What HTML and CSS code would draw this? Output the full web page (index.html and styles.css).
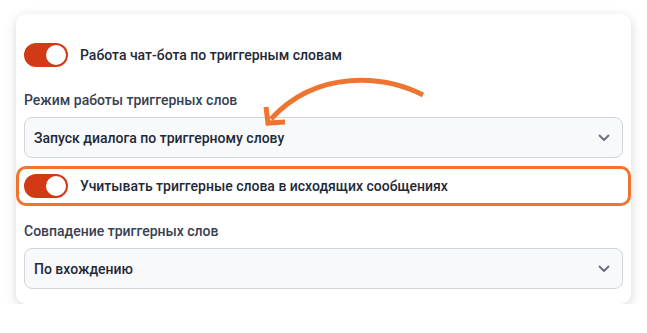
FILE: index.html
```html
<!DOCTYPE html>
<html lang="ru">
    <head>
        <meta charset="UTF-8">
        <meta name="viewport" content="width=device-width, initial-scale=1.0">
        <title>Триггерные слова</title>
        <link rel="stylesheet" href="styles.css">
    </head>
    <body>
        <div class="card">
            <div class="toggle-row">
                <span class="switch on"><span class="knob"></span></span>
                <span class="toggle-label">Работа чат-бота по триггерным словам</span>
            </div>

            <div class="field">
                <div class="field-label">Режим работы триггерных слов</div>
                <div class="select">
                    <span>Запуск диалога по триггерному слову</span>
                    <svg class="chevron" width="12" height="8" viewBox="0 0 12 8">
                        <path d="M1.5 1.5 L6 6 L10.5 1.5" fill="none" stroke="#6b7280" stroke-width="2" stroke-linecap="round" stroke-linejoin="round"/>
                    </svg>
                </div>
            </div>

            <div class="toggle-row highlight">
                <span class="switch on"><span class="knob"></span></span>
                <span class="toggle-label">Учитывать триггерные слова в исходящих сообщениях</span>
            </div>

            <div class="field second">
                <div class="field-label">Совпадение триггерных слов</div>
                <div class="select">
                    <span>По вхождению</span>
                    <svg class="chevron" width="12" height="8" viewBox="0 0 12 8">
                        <path d="M1.5 1.5 L6 6 L10.5 1.5" fill="none" stroke="#6b7280" stroke-width="2" stroke-linecap="round" stroke-linejoin="round"/>
                    </svg>
                </div>
            </div>

            <!-- стрелка-подсказка поверх карточки -->
            <svg class="arrow" width="647" height="333" viewBox="0 0 647 333">
                <path d="M423 95 C385 76 318 68 271 119" fill="none" stroke="#ef7430" stroke-width="5" stroke-linecap="butt"/>
                <path d="M266 107 L268 123 L285 122" fill="none" stroke="#ef7430" stroke-width="5" stroke-linejoin="miter"/>
            </svg>
        </div>
    </body>
</html>
```

FILE: styles.css
```css
body {
    margin: 0;
    background: #ffffff;
    font-family: Roboto, "Noto Sans", sans-serif;
}

.card {
    margin: 14px 0 0 16px;
    width: 615px;
    height: 290px;
    box-sizing: border-box;
    padding: 29px 8px 0;
    background: #ffffff;
    border-radius: 10px;
    box-shadow: 0 3px 12px rgba(0, 0, 0, 0.16);
}

.toggle-row {
    display: flex;
    align-items: center;
    gap: 12px;
    height: 24px;
}

.toggle-row.highlight {
    height: 34px;
    margin: 8px -8px 0;
    padding: 0 5px;
    border: 3px solid #ef7430;
    border-radius: 10px;
}

.switch {
    width: 44px;
    height: 24px;
    border-radius: 12px;
    background: #d23a16;
    display: flex;
    align-items: center;
    justify-content: flex-end;
    padding: 0 2px;
    box-sizing: border-box;
}

.knob {
    width: 20px;
    height: 20px;
    border-radius: 50%;
    background: #ffffff;
}

.toggle-label {
    font-size: 14px;
    font-weight: 500;
    color: #1f2937;
}

.field {
    margin-top: 23px;
}

.field.second {
    margin-top: 15px;
}

.field-label {
    font-size: 14px;
    font-weight: 500;
    line-height: 20px;
    color: #374151;
    margin-bottom: 7px;
}

.select {
    height: 41px;
    box-sizing: border-box;
    border: 1px solid #d1d5db;
    border-radius: 8px;
    background: #f8f9fb;
    display: flex;
    align-items: center;
    justify-content: space-between;
    padding: 0 12px 0 9px;
    font-size: 14px;
    font-weight: 500;
    color: #1f2937;
}

.arrow {
    position: absolute;
    left: 0;
    top: 0;
    pointer-events: none;
}
```
